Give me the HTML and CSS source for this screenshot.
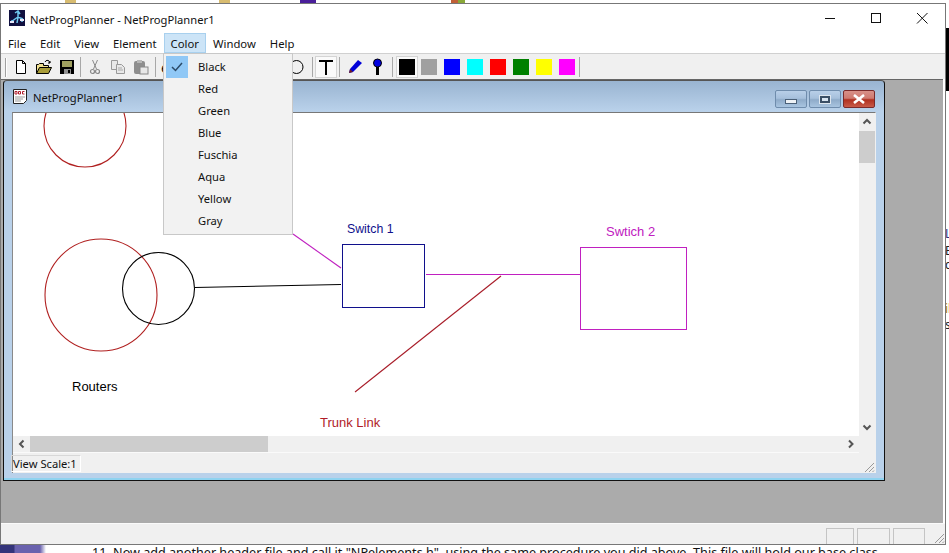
FILE: index.html
```html
<!DOCTYPE html>
<html>

<head>
  <meta charset="UTF-8">
  <title>NetProgPlanner</title>
  <link rel="stylesheet" href="styles.css">
</head>

<body>
  <div class="desktop">
    <!-- bits of the windows behind the app -->
    <span class="bit bit-a"></span>
    <span class="bit bit-b"></span>
    <span class="bit bit-c"></span>
    <span class="bit bit-d"></span>
    <span class="bit bit-e"></span>
    <span class="bit bit-black"></span>
    <span class="bit bit-side"></span>
    <span class="side-text side-1">L</span>
    <span class="side-text side-2">E</span>
    <span class="side-text side-3">c</span>
    <span class="side-text side-4">il</span>
    <span class="side-text side-5">s</span>
    <p class="behind">11. Now add another header file and call it "NPelements.h", using the same procedure you did above. This file will hold our base class.</p>

    <div class="app">
      <div class="titlebar">
        <svg class="app-icon" width="16" height="16" viewBox="0 0 16 16">
          <rect width="16" height="16" fill="#101040" />
          <path d="M9 1v6M6 3l3-2 2 3M2 12l4-3 3-2 5 2M9 7l-1 6M3 10v3M13 8v4" stroke="#6fc8f0" stroke-width="1.5" fill="none" />
          <rect x="1" y="11" width="4" height="2" fill="#e8e8f8" />
          <rect x="11" y="9" width="4" height="2" fill="#e8e8f8" />
        </svg>
        <span class="app-title">NetProgPlanner - NetProgPlanner1</span>
        <div class="caption-btns">
          <svg width="46" height="28" viewBox="0 0 46 28"><path d="M18 14.500h10" stroke="#111" fill="none" /></svg>
          <svg width="46" height="28" viewBox="0 0 46 28"><rect x="18.500" y="9.500" width="9" height="9" stroke="#111" fill="none" /></svg>
          <svg width="46" height="28" viewBox="0 0 46 28"><path d="M18 9l10.500 10.500M28.500 9L18 19.500" stroke="#111" fill="none" /></svg>
        </div>
      </div>

      <div class="menubar">
        <span class="menu-item">File</span>
        <span class="menu-item">Edit</span>
        <span class="menu-item">View</span>
        <span class="menu-item">Element</span>
        <span class="menu-item menu-open">Color</span>
        <span class="menu-item">Window</span>
        <span class="menu-item">Help</span>
      </div>

      <div class="toolbar">
        <span class="gripper"></span>
        <span class="tool">
          <svg width="16" height="16" viewBox="0 0 16 16"><path d="M3.500 1.500h6l3 3v10h-9zM9.500 1.500v3h3" fill="#fff" stroke="#000" /></svg>
        </span>
        <span class="tool">
          <svg width="16" height="16" viewBox="0 0 16 16"><path d="M0.500 14.500v-9h2l1-1h4v2h5v2" fill="#f0e090" stroke="#000" /><path d="M0.500 14.500l3-6h12l-3 6z" fill="#a89c38" stroke="#000" /><path d="M9 3c1-2 3-2 4-1l1 2M14 2v2h-2" fill="none" stroke="#000" /></svg>
        </span>
        <span class="tool">
          <svg width="16" height="16" viewBox="0 0 16 16"><rect x="1" y="1" width="14" height="14" fill="#000" /><rect x="3" y="2" width="10" height="6" fill="#a0a060" /><rect x="5" y="10" width="7" height="5" fill="#909090" /><rect x="9" y="11" width="2" height="3" fill="#000" /></svg>
        </span>
        <span class="sep"></span>
        <span class="tool off">
          <svg width="16" height="16" viewBox="0 0 16 16"><path d="M5.500 1l4 9M10.500 1l-4 9" stroke="#8a8a8a" fill="none" /><circle cx="5.500" cy="12.500" r="2" fill="none" stroke="#8a8a8a" stroke-width="1.200" /><circle cx="10.500" cy="12.500" r="2" fill="none" stroke="#8a8a8a" stroke-width="1.200" /></svg>
        </span>
        <span class="tool off">
          <svg width="16" height="16" viewBox="0 0 16 16"><path d="M1.500 1.500h6v9h-6z" fill="#e8e8e8" stroke="#999" /><path d="M6.500 5.500h5l3 3v6h-8z" fill="#e8e8e8" stroke="#999" /><path d="M8 9h4M8 11h5" stroke="#aaa" /></svg>
        </span>
        <span class="tool off">
          <svg width="16" height="16" viewBox="0 0 16 16"><rect x="1" y="2" width="11" height="13" rx="2" fill="#8e8e8e" /><rect x="4" y="1" width="5" height="3" fill="#b8b8b8" /><rect x="7" y="8" width="8" height="7" fill="#e8e8e8" stroke="#888" /></svg>
        </span>
        <span class="sep sep-b"></span>
        <span class="hidden-tools">
          <span class="stub">e</span>
          <svg class="ellipse-tool" width="15" height="16" viewBox="0 0 15 16"><ellipse cx="7.500" cy="8" rx="6.500" ry="6.500" fill="none" stroke="#000" /></svg>
        </span>
        <span class="sep"></span>
        <span class="tool tool-on">
          <svg width="16" height="16" viewBox="0 0 16 16"><path d="M1 2h14M8 2v14" stroke="#000" stroke-width="2" fill="none" /></svg>
        </span>
        <span class="sep"></span>
        <span class="tool pen">
          <svg width="16" height="16" viewBox="0 0 16 16"><path d="M11 1l4 3-9 9-4 1 1-4z" fill="#0000d8" /><path d="M2 14l1-4 3 3z" fill="#702020" /></svg>
        </span>
        <span class="tool pin">
          <svg width="16" height="18" viewBox="0 0 16 18"><circle cx="7.500" cy="5" r="4" fill="#0000e0" stroke="#000" /><rect x="6" y="9" width="3" height="8" fill="#000" /></svg>
        </span>
        <span class="sep"></span>
        <span class="swatch-btn swatch-on"><span class="swatch c-black"></span></span>
        <span class="swatch-btn"><span class="swatch c-gray"></span></span>
        <span class="swatch-btn"><span class="swatch c-blue"></span></span>
        <span class="swatch-btn"><span class="swatch c-aqua"></span></span>
        <span class="swatch-btn"><span class="swatch c-red"></span></span>
        <span class="swatch-btn"><span class="swatch c-green"></span></span>
        <span class="swatch-btn"><span class="swatch c-yellow"></span></span>
        <span class="swatch-btn"><span class="swatch c-fuchsia"></span></span>
        <span class="sep sep-end"></span>
      </div>

      <div class="mdi">
        <div class="child">
          <div class="child-title">
            <svg width="16" height="17" viewBox="0 0 16 17">
              <path d="M1.500 1.500h13v11l-3 3h-10z" fill="#fff" stroke="#222" />
              <path d="M3 6V3.500h2V6zM6.500 6V3.500h2V6zM12.500 3.500h-2V6h2" fill="none" stroke="#b02030" />
              <path d="M3 9h10M3 11h8M3 13h6" stroke="#999" />
            </svg>
            <span class="child-name">NetProgPlanner1</span>
            <div class="child-btns">
              <span class="cbtn"><i class="g-min"></i></span>
              <span class="cbtn"><i class="g-max"></i></span>
              <span class="cbtn cbtn-close">
                <svg width="14" height="10" viewBox="0 0 14 10"><path d="M2 1l10 8M12 1L2 9" stroke="#fff" stroke-width="2.600" fill="none" /></svg>
              </span>
            </div>
          </div>
          <div class="client">
            <div class="client-main">
              <svg class="canvas" viewBox="13 113 846 323" width="846" height="323">
                <g fill="none" stroke-width="1.100">
                  <circle cx="85" cy="126" r="41" stroke="#b02020" />
                  <circle cx="101" cy="295" r="56" stroke="#b02020" />
                  <circle cx="158.500" cy="288.500" r="36" stroke="#000" />
                  <path d="M195 287.500L341 284.500" stroke="#000" />
                  <path d="M293 234L341 268" stroke="#c020c0" />
                  <path d="M501 276L355 392" stroke="#a81c28" />
                </g>
                <g fill="none" shape-rendering="crispEdges">
                  <rect x="342.500" y="244.500" width="82" height="63" stroke="#10108c" />
                  <path d="M426 274.500H580" stroke="#c020c0" />
                  <rect x="580.500" y="247.500" width="106" height="82" stroke="#c020c0" />
                </g>
                <text x="347" y="233" class="lbl lbl-tight" fill="#10108c">Switch 1</text>
                <text x="606" y="236" class="lbl" fill="#c020c0">Swtich 2</text>
                <text x="72" y="391" class="lbl" fill="#000">Routers</text>
                <text x="320" y="427" class="lbl" fill="#b01c28">Trunk Link</text>
              </svg>
              <div class="vscroll">
                <svg width="16" height="17" viewBox="0 0 16 17"><path d="M4.500 10.500l3.500-3.500 3.500 3.500" stroke="#555" stroke-width="2" fill="none" /></svg>
                <div class="vthumb"></div>
                <svg class="arrow-end" width="16" height="17" viewBox="0 0 16 17"><path d="M4.500 6.500l3.500 3.500 3.500-3.500" stroke="#555" stroke-width="2" fill="none" /></svg>
              </div>
            </div>
            <div class="hscroll">
              <svg width="17" height="16" viewBox="0 0 17 16"><path d="M10.500 4.500l-3.500 3.500 3.500 3.500" stroke="#555" stroke-width="2" fill="none" /></svg>
              <div class="hthumb"></div>
              <svg class="arrow-end" width="17" height="16" viewBox="0 0 17 16"><path d="M7 4.500l3.500 3.500-3.500 3.500" stroke="#555" stroke-width="2" fill="none" /></svg>
            </div>
            <div class="child-status">
              <span class="scale-pane">View Scale:1</span>
              <svg class="grip" width="12" height="12" viewBox="0 0 12 12"><path d="M11 2L2 11M11 6L6 11M11 9.500L9.500 11" stroke="#999" fill="none" /></svg>
            </div>
          </div>
        </div>
      </div>

      <div class="statusbar">
        <span class="pane pane-1"></span>
        <span class="pane pane-2"></span>
        <span class="pane pane-3"></span>
        <svg class="grip" width="12" height="12" viewBox="0 0 12 12"><path d="M11 2L2 11M11 6L6 11M11 9.500L9.500 11" stroke="#999" fill="none" /></svg>
      </div>

      <div class="dropdown">
        <div class="drop-item">
          <span class="check">
            <svg width="14" height="12" viewBox="0 0 14 12"><path d="M2 6l3.500 3.500L12 2" stroke="#2b4a68" stroke-width="1.500" fill="none" /></svg>
          </span>
          <span class="drop-label">Black</span>
        </div>
        <div class="drop-item"><span class="check-slot"></span><span class="drop-label">Red</span></div>
        <div class="drop-item"><span class="check-slot"></span><span class="drop-label">Green</span></div>
        <div class="drop-item"><span class="check-slot"></span><span class="drop-label">Blue</span></div>
        <div class="drop-item"><span class="check-slot"></span><span class="drop-label">Fuschia</span></div>
        <div class="drop-item"><span class="check-slot"></span><span class="drop-label">Aqua</span></div>
        <div class="drop-item"><span class="check-slot"></span><span class="drop-label">Yellow</span></div>
        <div class="drop-item"><span class="check-slot"></span><span class="drop-label">Gray</span></div>
      </div>
    </div>
  </div>
</body>

</html>
```

FILE: styles.css
```css
html,
body {
  margin: 0;
  height: 100%;
  overflow: hidden;
  background: #fff;
}

body {
  font-family: "Noto Sans", sans-serif;
  font-size: 11.2px;
  color: #111;
}

.desktop {
  position: relative;
  width: 949px;
  height: 553px;
  overflow: hidden;
}

/* stuff behind the app window */
.bit {
  position: absolute;
  top: 0;
  height: 3px;
}

.bit-a {
  left: 65px;
  width: 11px;
  background: #d8bc70;
}

.bit-b {
  left: 219px;
  width: 11px;
  background: #d8bc70;
}

.bit-c {
  left: 300px;
  width: 16px;
  background: #4a1e9a;
}

.bit-d {
  left: 451px;
  width: 7px;
  background: #c06038;
}

.bit-e {
  left: 458px;
  width: 7px;
  background: #8aa838;
}

.bit-black {
  top: 28px;
  left: 946px;
  width: 3px;
  height: 63px;
  background: #000;
}

.bit-side {
  top: 545px;
  left: 0;
  width: 46px;
  height: 8px;
  background: linear-gradient(to right, #34347a 0, #34347a 14px, #6a62ae 15px, #6a62ae 40px, #fff 46px);
}

.side-text {
  position: absolute;
  left: 945px;
  font-size: 12px;
  line-height: 12px;
  color: #222;
}

.side-1 {
  top: 228px;
  color: #303080;
}

.side-2 {
  top: 245px;
}

.side-3 {
  top: 259px;
}

.side-4 {
  top: 303px;
  color: #b08000;
}

.side-5 {
  top: 319px;
}

.behind {
  position: absolute;
  top: 545px;
  left: 92px;
  margin: 0;
  font-size: 12.6px;
  line-height: 16px;
  white-space: nowrap;
  color: #111;
}

/* main window */
.app {
  position: absolute;
  left: 0;
  top: 3px;
  width: 944px;
  height: 540px;
  display: flex;
  flex-direction: column;
  background: #fff;
  border: 1px solid #777;
}

.titlebar {
  height: 28px;
  display: flex;
  align-items: center;
  flex: none;
}

.app-icon {
  margin-left: 8px;
}

.app-title {
  margin-left: 5px;
  padding-top: 2px;
}

.caption-btns {
  margin-left: auto;
  display: flex;
}

.menubar {
  height: 21px;
  flex: none;
  display: flex;
  border-bottom: 1px solid #d0d0d0;
}

.menu-item {
  padding: 0 6px;
  border: 1px solid transparent;
  height: 20px;
  box-sizing: border-box;
  line-height: 20px;
  margin-top: 1px;
  font-size: 11.3px;
}

.menu-open {
  background: #cce4f7;
  border-color: #a8d0ee;
}

.toolbar {
  height: 25px;
  flex: none;
  display: flex;
  align-items: center;
  background: #f0f0f0;
  box-sizing: border-box;
  padding: 1px 0 0 4px;
}

.gripper {
  width: 1px;
  height: 19px;
  background: #a0a0a0;
  border-right: 1px solid #fff;
  margin-right: 2px;
}

.tool {
  width: 23px;
  height: 22px;
  display: flex;
  align-items: center;
  justify-content: center;
  flex: none;
}

.tool-on {
  width: 22px;
  background: #fafafa;
  border: 1px solid #d4d4d4;
  box-sizing: border-box;
}

.pen {
  margin-left: 1px;
}

.pin {
  margin-right: 1px;
}

.sep {
  width: 1px;
  height: 20px;
  background: #a8a8a8;
  margin: 0 2px;
  flex: none;
}

.sep-b {
  margin-left: 3px;
}

.sep-end {
  margin-left: 0;
}

.hidden-tools {
  width: 152px;
  box-sizing: border-box;
  padding-right: 6px;
  display: flex;
  justify-content: space-between;
  align-items: center;
  flex: none;
}

.stub {
  font-size: 14px;
  margin-left: 3px;
}

.swatch-btn {
  width: 23px;
  height: 22px;
  box-sizing: border-box;
  padding-left: 3px;
  display: flex;
  align-items: center;
  flex: none;
}

.swatch-on {
  width: 22px;
  margin-left: 1px;
  padding-left: 2px;
  background: #fafafa;
  border: 1px solid #d4d4d4;
}

.swatch {
  width: 16px;
  height: 16px;
}

.c-black {
  background: #000;
}

.c-gray {
  background: #a0a0a0;
}

.c-blue {
  background: #0000ff;
}

.c-aqua {
  background: #00ffff;
}

.c-red {
  background: #ff0000;
}

.c-green {
  background: #008000;
}

.c-yellow {
  background: #ffff00;
}

.c-fuchsia {
  background: #ff00ff;
}

/* mdi area */
.mdi {
  position: relative;
  flex: 1;
  background: #ababab;
  margin-right: 2px;
  border-top: 1px solid #666;
}

.child {
  position: absolute;
  left: 2px;
  top: 0;
  width: 882px;
  height: 401px;
  box-sizing: border-box;
  border: 1px solid #111;
  border-top-color: #555;
  border-radius: 4px 4px 0 0;
  display: flex;
  flex-direction: column;
  padding: 0 8px 7px 8px;
  background: linear-gradient(to bottom, #99b4d1 0, #b9d1ea 30px, #b9d1ea 100%);
  box-shadow: inset 0 -2px 0 #8fd3f0;
}

.child-title {
  height: 31px;
  flex: none;
  display: flex;
  align-items: center;
}

.child-name {
  margin-left: 5px;
  padding-top: 1px;
}

.child-btns {
  margin-left: auto;
  margin-right: 1px;
  display: flex;
  gap: 2px;
  margin-top: 5px;
}

.cbtn {
  width: 32px;
  height: 18px;
  border: 1px solid #6f8cac;
  border-radius: 2px;
  box-sizing: border-box;
  background: linear-gradient(to bottom, #b8cfe8 0, #a6c0dc 45%, #8fabc9 55%, #a8c4e0 100%);
  display: flex;
  align-items: center;
  justify-content: center;
}

.cbtn-close {
  border-color: #7a2a2a;
  background: linear-gradient(to bottom, #d89088 0, #cf7a70 45%, #b03020 55%, #c85a48 100%);
}

.g-min {
  width: 10px;
  height: 3px;
  margin-top: 5px;
  background: #eef2f6;
  border: 1px solid #4a6078;
}

.g-max {
  width: 6px;
  height: 3px;
  background: #d8e4f0;
  border: 2px solid #3a4f66;
  outline: 1px solid #dde6ef;
}

.client {
  flex: 1;
  display: flex;
  flex-direction: column;
  background: #f0f0f0;
  border: 1px solid #777;
  border-width: 1px 1px 0 1px;
  border-left-color: #8a8a8a;
  border-right-color: #f0f0f0;
  min-height: 0;
}

.client-main {
  display: flex;
  flex: none;
  height: 323px;
}

.canvas {
  display: block;
  background: #fff;
  flex: none;
}

.lbl {
  font-family: "Liberation Sans", sans-serif;
  font-size: 13px;
}

.lbl-tight {
  font-size: 12.3px;
}

.vscroll {
  width: 16px;
  display: flex;
  flex-direction: column;
  flex: none;
}

.vthumb {
  height: 32px;
  margin-top: 1px;
  background: #cdcdcd;
}

.arrow-end {
  margin-top: auto;
  margin-left: auto;
}

.hscroll {
  height: 16px;
  display: flex;
  align-items: center;
  flex: none;
  border-bottom: 1px solid #fafafa;
  width: 846px;
}

.hthumb {
  width: 238px;
  height: 16px;
  background: #cdcdcd;
}

.child-status {
  flex: 1;
  display: flex;
  align-items: flex-end;
  justify-content: space-between;
}

.scale-pane {
  width: 70px;
  height: 17px;
  margin: 0 0 1px -2px;
  box-sizing: border-box;
  border: 1px solid #d8d8d8;
  border-right-color: #fff;
  border-bottom-color: #fff;
  padding: 1px 0 0 1px;
  line-height: 14px;
  white-space: nowrap;
}

.grip {
  display: block;
  flex: none;
}

/* bottom status bar */
.statusbar {
  height: 21px;
  flex: none;
  background: #f0f0f0;
  display: flex;
  justify-content: flex-end;
  align-items: flex-end;
  border-top: 1px solid #fafafa;
  box-sizing: border-box;
}

.pane {
  height: 16px;
  box-sizing: border-box;
  border: 1px solid #c4c4c4;
  border-bottom: none;
  margin-right: 3px;
}

.pane-1 {
  width: 28px;
}

.pane-2 {
  width: 33px;
}

.pane-3 {
  width: 32px;
  margin-right: 8px;
}

/* the open Color menu */
.dropdown {
  position: absolute;
  left: 162px;
  top: 49px;
  width: 130px;
  height: 182px;
  box-sizing: border-box;
  padding: 2px;
  background: #f2f2f2;
  border: 1px solid #c8c8c8;
}

.drop-item {
  height: 22px;
  display: flex;
  align-items: center;
}

.drop-label {
  padding-bottom: 2px;
}

.check,
.check-slot {
  width: 22px;
  height: 22px;
  margin-right: 10px;
  flex: none;
  display: flex;
  align-items: center;
  justify-content: center;
}

.check {
  background: #90c8f6;
}
```
